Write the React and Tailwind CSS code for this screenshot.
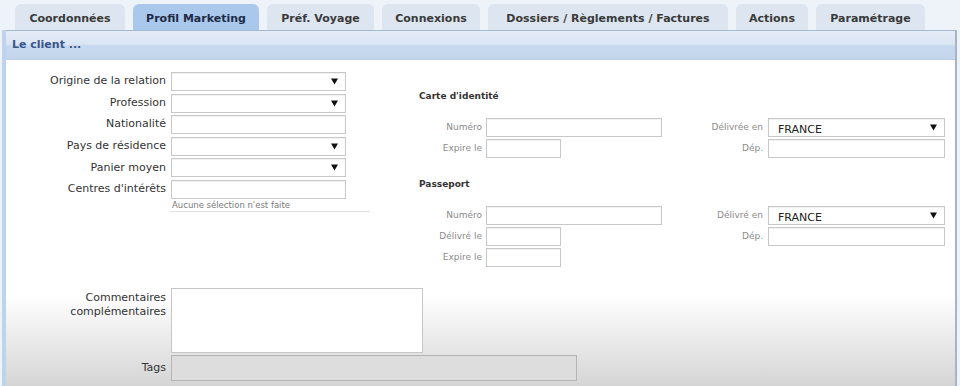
import React from "react";

const TABS = [
  { label: "Coordonnées", w: "w-[110px]" },
  { label: "Profil Marketing", w: "w-[126px]", active: true },
  { label: "Préf. Voyage", w: "w-[107px]" },
  { label: "Connexions", w: "w-[98px]" },
  { label: "Dossiers / Règlements / Factures", w: "w-[240px]" },
  { label: "Actions", w: "w-[72px]" },
  { label: "Paramétrage", w: "w-[109px]" },
];

const LEFT_ROWS = [
  { label: "Origine de la relation", select: true },
  { label: "Profession", select: true },
  { label: "Nationalité" },
  { label: "Pays de résidence", select: true },
  { label: "Panier moyen", select: true },
  { label: "Centres d'intérêts" },
];

const Arrow = () => (
  <svg width="7" height="7" viewBox="0 0 7 7" className="shrink-0">
    <path d="M0,0.5 L7,0.5 L3.5,6.5 Z" fill="#111" />
  </svg>
);

const Field = ({ className = "", select = false, value = "" }) => (
  <div
    className={`h-[19px] border border-[#c8c8c8] bg-white flex items-center justify-between pl-[9px] pr-[7px] shadow-[inset_0_1px_1px_rgba(0,0,0,0.06)] ${className}`}
  >
    <span className="text-[11px] text-[#222] pt-[4px] leading-none">{value}</span>
    {select && <Arrow />}
  </div>
);

const SmallLabel = ({ children, className = "" }) => (
  <div className={`text-[9px] text-[#8a8a8a] text-right leading-none ${className}`}>{children}</div>
);

const DocRow = ({ left, leftW, right, rightSelect }) => (
  <div className="flex items-center h-[19px]">
    <SmallLabel className="w-[63px]">{left}</SmallLabel>
    <div className="w-[180px] pl-[4px]">
      <Field className={leftW} />
    </div>
    {right && (
      <>
        <SmallLabel className="w-[106px] pr-[5px]">{right}</SmallLabel>
        <Field className="w-[177px]" select={rightSelect} value={rightSelect ? "FRANCE" : ""} />
      </>
    )}
  </div>
);

export default function App() {
  return (
    <div className="w-[960px] h-[386px] overflow-hidden bg-[#eef3f9] font-['DejaVu_Sans',sans-serif] text-[#333]">
      {/* Tabs */}
      <div className="h-[30px] pt-[4px] pl-[15px] flex gap-[8px]">
        {TABS.map((t) => (
          <div
            key={t.label}
            className={`${t.w} h-[26px] rounded-t-[6px] flex items-center justify-center pt-[5px] text-[11px] font-bold ${
              t.active ? "bg-[#a9c8ec] text-[#1f2b45]" : "bg-[#dde6f0] text-[#3a3a3a]"
            }`}
          >
            {t.label}
          </div>
        ))}
      </div>

      {/* Panel */}
      <div className="ml-[2px] w-[955px] h-[356px] flex flex-col border-l-[4px] border-l-[#bfd4ec] border-r-2 border-r-[#a7b4c6]">
        <div className="h-[30px] shrink-0 border-t border-t-[#a6b8cf] border-b border-b-[#bccde2] bg-[linear-gradient(to_bottom,#e4ecf6_0%,#dbe6f3_45%,#c6d8ee_55%,#c3d6ec_100%)] flex items-center pl-[6px]">
          <span className="text-[11px] font-bold text-[#35558c]">Le client ...</span>
        </div>

        <div className="flex-1 bg-[linear-gradient(to_bottom,#ffffff_0%,#ffffff_72%,#d5d5d5_100%)]">
          <div className="flex">
            {/* Left column */}
            <div className="w-[394px] pt-[12px]">
              <div className="flex flex-col gap-[2.6px]">
                {LEFT_ROWS.map((r) => (
                  <div key={r.label} className="flex items-center h-[19px]">
                    <div className="w-[160px] text-right text-[11px] text-[#333]">{r.label}</div>
                    <Field className="ml-[5px] w-[175px]" select={r.select} />
                  </div>
                ))}
              </div>
              <div className="ml-[164px] w-[200px] h-[13px] pl-[2px] pt-[2px] border-b border-b-[#e2e2e2] text-[8.5px] text-[#7a7a7a] leading-none">
                Aucune sélection n'est faite
              </div>
            </div>

            {/* Right column */}
            <div className="pl-[19px] pt-[30px]">
              <div className="h-[12px] text-[9px] font-bold text-[#333] leading-[12px]">Carte d'identité</div>
              <div className="mt-[16px] flex flex-col gap-[2px]">
                <DocRow left="Numéro" leftW="w-[176px]" right="Délivrée en" rightSelect />
                <DocRow left="Expire le" leftW="w-[75px]" right="Dép." />
              </div>

              <div className="mt-[20px] h-[12px] text-[9px] font-bold text-[#333] leading-[12px]">Passeport</div>
              <div className="mt-[16px] flex flex-col gap-[2px]">
                <DocRow left="Numéro" leftW="w-[176px]" right="Délivré en" rightSelect />
                <DocRow left="Délivré le" leftW="w-[75px]" right="Dép." />
                <DocRow left="Expire le" leftW="w-[75px]" />
              </div>
            </div>
          </div>

          {/* Bottom */}
          <div className="mt-[21px]">
            <div className="flex items-start">
              <div className="w-[160px] text-right text-[11px] leading-[14px] pt-[3px] text-[#333]">
                Commentaires
                <br />
                complémentaires
              </div>
              <div className="ml-[5px] w-[252px] h-[65px] border border-[#c6c6c6] bg-white" />
            </div>
            <div className="mt-[2px] flex items-center">
              <div className="w-[160px] text-right text-[11px] text-[#333]">Tags</div>
              <div className="ml-[5px] w-[406px] h-[26px] border border-[#b4b4b4] bg-[#dddddd]" />
            </div>
          </div>
        </div>
      </div>
    </div>
  );
}
